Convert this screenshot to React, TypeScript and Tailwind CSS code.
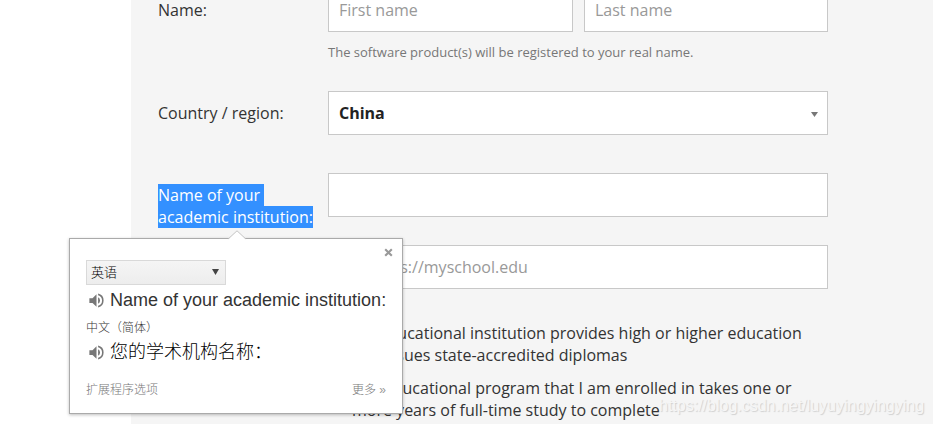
import type { ReactNode } from 'react';

function Field({ children, className = '' }: { children?: ReactNode; className?: string }) {
  return (
    <div className={`flex h-11 items-center border border-[#c8c8c8] bg-white px-2.5 ${className}`}>{children}</div>
  );
}

function Speaker() {
  return (
    <svg viewBox="0 0 24 24" className="h-[19px] w-[19px] shrink-0" fill="#777">
      <path d="M3 9v6h4l5 5V4L7 9H3zm13.5 3A4.5 4.5 0 0 0 14 7.97v8.05A4.5 4.5 0 0 0 16.5 12zM14 3.23v2.06a7 7 0 0 1 0 13.42v2.06a9 9 0 0 0 0-17.54z" />
    </svg>
  );
}

function TranslatePopup() {
  return (
    <div className="absolute left-[69px] top-[238px] h-[176px] w-[334px] border border-[#aaa] bg-white px-4 font-['Liberation_Sans','Noto_Sans_CJK_SC',sans-serif] text-[#222] shadow-[0_1px_3px_rgba(0,0,0,0.25)]">
      <svg className="absolute -top-[9px] left-[158px]" width="18" height="10" viewBox="0 0 18 10">
        <path d="M0.5 9 L9 0.8 L17.5 9 V10 H0.5 Z" fill="#fff" />
        <path d="M0.5 8.7 L9 0.8 L17.5 8.7" fill="none" stroke="#c4c4c4" />
      </svg>
      <svg className="absolute right-[9px] top-[9px]" width="9" height="9" viewBox="0 0 9 9">
        <path d="M1.2 1.2 L7.8 7.8 M7.8 1.2 L1.2 7.8" stroke="#999" strokeWidth="2.1" />
      </svg>
      <div className="mt-[21px] flex h-[25px] w-[140px] items-center justify-between border border-[#d9d9d9] bg-linear-to-b from-[#f5f5f5] to-[#ededed] pl-1 pr-1.5 text-[13px] font-light text-black">
        <span>英语</span>
        <svg width="7" height="6" viewBox="0 0 7 6" className="-mt-0.5">
          <path d="M0 0h7L3.5 6z" fill="#444" />
        </svg>
      </div>
      <div className="mt-1 flex h-[22px] items-center gap-1 pl-px text-[18px] text-[#333]">
        <Speaker />
        <span className="whitespace-nowrap">Name of your academic institution:</span>
      </div>
      <div className="mt-[7px] h-5 text-[12px] font-light leading-5 text-[#333]">中文（简体）</div>
      <div className="mt-[3px] flex h-[22px] items-center gap-1 pl-px text-[18px] font-light text-black">
        <Speaker />
        <span className="whitespace-nowrap">您的学术机构名称：</span>
      </div>
      <div className="mt-[17px] flex h-5 justify-between text-[12px] font-light leading-5 text-[#777]">
        <span>扩展程序选项</span>
        <span>更多 <span className="text-[#999]">»</span></span>
      </div>
    </div>
  );
}

export default function App() {
  return (
    <div className="relative h-[424px] w-[933px] overflow-hidden bg-white font-['Open_Sans',sans-serif] text-base leading-[22px] text-[#333]">
      <main className="ml-[131px] flex h-full flex-col bg-[#f5f5f5] pl-[27px]">
        <div className="-mt-3 flex shrink-0">
          <div className="w-[170px] pt-[11px]">Name:</div>
          <div className="w-[500px]">
            <div className="flex gap-[11px] text-[#999]">
              <Field className="w-[245px]">First name</Field>
              <Field className="w-[244px]">Last name</Field>
            </div>
            <div className="mt-[11px] h-[18px] text-[13px] leading-[18px] text-[#777]">
              The software product(s) will be registered to your real name.
            </div>
          </div>
        </div>
        <div className="mt-[30px] flex shrink-0">
          <div className="w-[170px] pt-[11px]">Country / region:</div>
          <Field className="w-[500px] justify-between">
            <span className="font-bold text-[#222]">China</span>
            <svg width="7" height="5" viewBox="0 0 7 5" className="-mr-px mt-0.5">
              <path d="M0 0h7L3.5 5z" fill="#777" />
            </svg>
          </Field>
        </div>
        <div className="mt-[38px] flex h-[55px] shrink-0">
          <div className="w-[170px] pt-[11px] text-white">
            <div className="h-[22px] w-[106px] whitespace-nowrap bg-[#3390ff]">Name of your</div>
            <div className="h-[22px] w-[155px] whitespace-nowrap bg-[#3390ff]">academic institution:</div>
          </div>
          <Field className="w-[500px]" />
        </div>
        <Field className="ml-[170px] mt-[17px] w-[500px] shrink-0 text-[#999]">e.g. https://myschool.edu</Field>
        <div className="ml-[194px] mt-[33px] w-[476px] shrink-0 whitespace-nowrap">
          <p>My educational institution provides high or higher education<br />and issues state-accredited diplomas</p>
          <p className="mt-[11px]">The educational program that I am enrolled in takes one or<br />more years of full-time study to complete</p>
        </div>
      </main>
      <TranslatePopup />
      <div className="absolute left-[659px] top-[395px] whitespace-nowrap font-['Liberation_Sans',sans-serif] text-[16px] text-[#f6f6f6] [text-shadow:1px_1px_1px_#d0d0d0]">
        https://blog.csdn.net/luyuyingyingying
      </div>
    </div>
  );
}
